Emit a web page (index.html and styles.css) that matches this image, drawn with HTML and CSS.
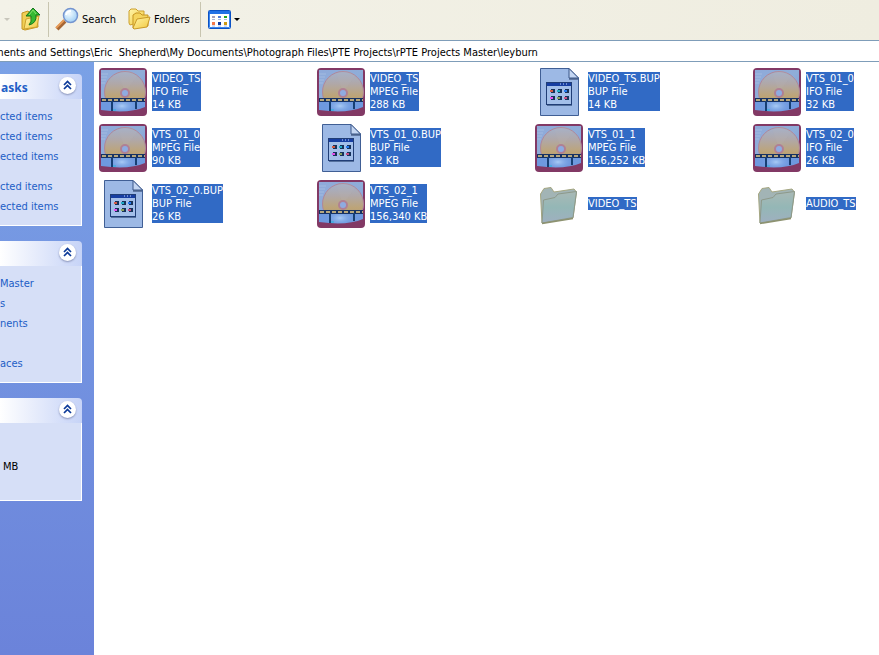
FILE: index.html
```html
<!DOCTYPE html>
<html lang="en">
<head>
<meta charset="utf-8">
<title>leyburn</title>
<link rel="stylesheet" href="styles.css">
</head>
<body>
<svg class="defs" aria-hidden="true">
  <defs>
    <linearGradient id="sky" x1="0" y1="0" x2="1" y2="1"><stop offset="0" stop-color="#8faada"/><stop offset=".5" stop-color="#8fadd8"/><stop offset="1" stop-color="#739bdd"/></linearGradient>
    <linearGradient id="disc" x1="0" y1="0" x2="0" y2="1"><stop offset="0" stop-color="#a3b0cc"/><stop offset=".3" stop-color="#b0a8a8"/><stop offset=".6" stop-color="#bda477"/><stop offset=".85" stop-color="#a9987f"/><stop offset="1" stop-color="#719ce0"/></linearGradient>
    <linearGradient id="fold" x1="0" y1="0" x2="0" y2="1"><stop offset="0" stop-color="#a9b9b6"/><stop offset=".5" stop-color="#94b7b6"/><stop offset="1" stop-color="#9fafc0"/></linearGradient>
    <linearGradient id="yellow" x1="0" y1="0" x2="1" y2="1"><stop offset="0" stop-color="#fff5a8"/><stop offset="1" stop-color="#f2c83f"/></linearGradient>
    <radialGradient id="lens" cx=".4" cy=".35" r=".7"><stop offset="0" stop-color="#f4fcff"/><stop offset="1" stop-color="#9ccdf4"/></radialGradient>
    <radialGradient id="glow"><stop offset="0" stop-color="#a9cbf5"/><stop offset="1" stop-color="#719be0" stop-opacity="0"/></radialGradient>
  </defs>
  <symbol id="video" viewBox="0 0 48 48">
    <rect width="48" height="48" rx="4" fill="#823965"/>
    <path d="M2 2H46V41Q36 46 20 44Q10 43 2 43Z" fill="url(#sky)"/>
    <path d="M2 6H9M2 9H8M2 12H7M2 15H6" stroke="#a3bbe0"/>
    <circle cx="26" cy="24" r="20.500" fill="url(#disc)" stroke="#b08799"/>
    <path d="M26 24L19 5Q31 0 38 8Z" fill="#b8b4b3" opacity=".2"/>
    <circle cx="26" cy="25" r="4" fill="#8fabe0" stroke="#b08094" stroke-width="2"/>
    <path d="M2 34H46V41Q36 46 20 44Q10 43 2 43Z" fill="#6e99df"/>
    <ellipse cx="23" cy="38" rx="15" ry="8" fill="url(#glow)"/>
    <path d="M2 42Q30 46 46 39V46H2Z" fill="#823965"/>
    <path d="M2 30H46V34H2Z" fill="#173263"/>
    <path d="M3 32H46" stroke="#b5a77e" stroke-width="2" stroke-dasharray="4 2"/>
    <path d="M13 33V43M37 33V41" stroke="#173f74" stroke-width="2"/>
    <path d="M14 42H17" stroke="#25b7df"/>
  </symbol>
  <symbol id="backup" viewBox="0 0 48 48">
    <path d="M5.500 .5H34L43.500 10V47.500H5.500Z" fill="#9db9e5" stroke="#405f95"/>
    <path d="M34 .5V10H43.500Z" fill="#c4d6f2" stroke="#3b5788"/>
    <path d="M34 11H43" stroke="#263a62"/>
    <rect x="11.500" y="14.500" width="25" height="22" fill="#a3bfe9" stroke="#213e76"/>
    <path d="M12 16.500H36" stroke="#173ea1" stroke-width="3"/>
    <path d="M25 16H34" stroke="#c5dcff" stroke-dasharray="1 2"/>
    <path d="M12 37.500H37" stroke="#55719d"/>
    <g fill="#17325a"><path d="M16 21h4v4h-4zM23 21h4v4h-4zM30 21h4v4h-4zM16 28h4v4h-4zM23 28h4v4h-4zM30 28h4v4h-4z"/></g>
    <path d="M15 22h3v2h-3z" fill="#d35a45"/><path d="M22 22h3v2h-3z" fill="#20aac5"/><path d="M29 22h3v2h-3z" fill="#277aed"/>
    <path d="M15 29h3v2h-3z" fill="#e04fe9"/><path d="M22 29h3v2h-3z" fill="#87a05d"/><path d="M29 29h3v2h-3z" fill="#c74f83"/>
  </symbol>
  <symbol id="folder" viewBox="0 0 48 48">
    <path d="M7 43L5.500 14L9 8.500L16 7.500L19 12L39 9L41.500 12L38 38Z" fill="#a2b4b5" stroke="#a5a681"/>
    <path d="M7 43L8.500 20L20 17.500L23 14L41.500 11.500L38 37.500Z" fill="url(#fold)" stroke="#8d998a"/>
    <path d="M7 43.500L38 38.500" stroke="#8d9270" stroke-width="1.500"/>
  </symbol>
  <symbol id="chevrons" viewBox="0 0 17 17">
    <path d="M5 8L8.500 4.500L12 8M5 12L8.500 8.500L12 12" fill="none" stroke="#0b3998" stroke-width="1.700"/>
  </symbol>
</svg>

<div class="toolbar" role="toolbar" aria-label="Standard buttons">
  <button class="tool history" type="button" aria-label="Recent pages"><span class="arrow faded"></span></button>
  <button class="tool up" type="button" aria-label="Up">
    <svg width="20" height="24" viewBox="0 0 20 24"><path d="M1 22V6L7 4L9 6L16 5L17 20L4 23Z" fill="#f0cf55" stroke="#c59522"/><path d="M3 22L5 12L18 9L16 20Z" fill="url(#yellow)" stroke="#cda02c"/><path d="M8 18Q11 15 10 9H5L12 1L19 8H15Q16 16 8 18Z" fill="#35b932" stroke="#14751a"/><path d="M8 8L12 3L15 7" fill="none" stroke="#87e26c"/></svg>
  </button>
  <span class="divider"></span>
  <button class="tool search" type="button">
    <svg width="24" height="24" viewBox="0 0 24 24"><path d="M2 22L10 14" stroke="#a66635" stroke-width="4"/><path d="M1 21L9 13" stroke="#e79b57" stroke-width="2"/><circle cx="15.500" cy="8.500" r="7" fill="url(#lens)" stroke="#7494cf" stroke-width="1.500"/><path d="M11 8Q12 4 16 4" fill="none" stroke="#fff" stroke-width="2"/></svg>
    <span>Search</span>
  </button>
  <button class="tool folders" type="button">
    <svg width="23" height="22" viewBox="0 0 23 22"><path d="M1 15V3L3 1H8L10 3H16V13L2 17Z" fill="url(#yellow)" stroke="#cda02c"/><path d="M5 20V7L8 5H12L14 7H20V18Z" fill="#f5d55e" stroke="#c59522"/><path d="M5 20L9 11L22 9L19 19L6 21Z" fill="url(#yellow)" stroke="#c99927"/></svg>
    <span>Folders</span>
  </button>
  <span class="divider"></span>
  <button class="tool views" type="button" aria-label="Views">
    <svg width="23" height="19" viewBox="0 0 23 19"><rect x=".5" y=".5" width="22" height="18" rx="1" fill="#fff" stroke="#0b52c5"/><path d="M1 1H22V4H1Z" fill="#2171e6"/><path d="M1.500 4V17.500H21.500V4" fill="none" stroke="#3a86ed"/><path d="M4 6h3v2H4z" fill="#a5a0bd"/><path d="M10 6h3v2h-3z" fill="#527bd5"/><path d="M16 6h3v2h-3z" fill="#26a51f"/><path d="M4 12h3v3H4z" fill="#f47949"/><path d="M10 12h3v3h-3z" fill="#123b9e"/><path d="M16 12h3v3h-3z" fill="#cf9b13"/><path d="M4 9.500H7M10 9.500H13M16 9.500H19M4 16H7M10 16H13M16 16H19" stroke="#aab9dc"/></svg>
    <span class="arrow"></span>
  </button>
</div>

<div class="address"><input type="text" aria-label="Address" value="ments and Settings\Eric  Shepherd\My Documents\Photograph Files\PTE Projects\rPTE Projects Master\leyburn"></div>

<div class="main">
  <aside class="sidebar">
    <section class="panel">
      <header><h2>asks</h2><button type="button" aria-label="Collapse tasks"><svg width="17" height="17"><use href="#chevrons"/></svg></button></header>
      <div class="panel-body">
        <a href="#">cted items</a>
        <a href="#">cted items</a>
        <a href="#">ected items</a>
        <a href="#" class="spaced">cted items</a>
        <a href="#">ected items</a>
      </div>
    </section>
    <section class="panel">
      <header><button type="button" aria-label="Collapse places"><svg width="17" height="17"><use href="#chevrons"/></svg></button></header>
      <div class="panel-body">
        <a href="#">Master</a>
        <a href="#">s</a>
        <a href="#">nents</a>
        <a href="#" class="skip">aces</a>
      </div>
    </section>
    <section class="panel">
      <header><button type="button" aria-label="Collapse details"><svg width="17" height="17"><use href="#chevrons"/></svg></button></header>
      <div class="panel-body details"><p>MB</p></div>
    </section>
  </aside>

  <main class="files">
    <div class="file"><svg><use href="#video"/></svg><div class="label">VIDEO_TS<br>IFO File<br>14 KB</div></div>
    <div class="file"><svg><use href="#video"/></svg><div class="label">VIDEO_TS<br>MPEG File<br>288 KB</div></div>
    <div class="file"><svg><use href="#backup"/></svg><div class="label">VIDEO_TS.BUP<br>BUP File<br>14 KB</div></div>
    <div class="file"><svg><use href="#video"/></svg><div class="label">VTS_01_0<br>IFO File<br>32 KB</div></div>
    <div class="file"><svg><use href="#video"/></svg><div class="label">VTS_01_0<br>MPEG File<br>90 KB</div></div>
    <div class="file"><svg><use href="#backup"/></svg><div class="label">VTS_01_0.BUP<br>BUP File<br>32 KB</div></div>
    <div class="file"><svg><use href="#video"/></svg><div class="label">VTS_01_1<br>MPEG File<br>156,252 KB</div></div>
    <div class="file"><svg><use href="#video"/></svg><div class="label">VTS_02_0<br>IFO File<br>26 KB</div></div>
    <div class="file"><svg><use href="#backup"/></svg><div class="label">VTS_02_0.BUP<br>BUP File<br>26 KB</div></div>
    <div class="file"><svg><use href="#video"/></svg><div class="label">VTS_02_1<br>MPEG File<br>156,340 KB</div></div>
    <div class="file"><svg><use href="#folder"/></svg><div class="label">VIDEO_TS</div></div>
    <div class="file"><svg><use href="#folder"/></svg><div class="label">AUDIO_TS</div></div>
  </main>
</div>
</body>
</html>
```
FILE: styles.css
```css
* { box-sizing: border-box; }

body {
  margin: 0;
  height: 100vh;
  display: flex;
  flex-direction: column;
  overflow: hidden;
  background: #fff;
  color: #000;
  font: 11px/13px Tahoma, "DejaVu Sans Condensed", "Noto Sans", sans-serif;
}

button, input { font: inherit; color: inherit; }
button { border: 0; padding: 0; background: none; }
.defs { position: absolute; width: 0; height: 0; }

.toolbar {
  flex: none;
  display: flex;
  align-items: center;
  height: 40px;
  padding-bottom: 2px;
  background: linear-gradient(90deg, #f3f2e8, #efede0);
}
.tool { display: flex; align-items: center; gap: 3px; }
.history { width: 21px; padding-left: 4px; }
.up { width: 27px; }
.search { padding-left: 6px; }
.folders { padding-left: 12px; }
.views { padding-left: 7px; }
.divider { width: 1px; height: 35px; background: #c8c5b0; }
.folders + .divider { margin-left: 10px; }
.arrow {
  border: 3px solid transparent;
  border-top-color: #000;
  border-bottom: 0;
}
.faded { border-top-color: #c8c6bb; }

.address {
  flex: none;
  border: solid #7f9db9;
  border-width: 1px 0;
  height: 22px;
  overflow: hidden;
}
.address input {
  display: block;
  width: 100%;
  height: 20px;
  margin-left: -6px;
  border: 0;
  padding: 2px 0 0;
  outline: 0;
  background: #fff;
}

.main { flex: 1; display: flex; min-height: 0; }

.sidebar {
  flex: none;
  width: 94px;
  padding: 12px 12px 0 0;
  background: linear-gradient(#7aa1e6, #6b83da);
  display: flex;
  flex-direction: column;
  gap: 15px;
}
.panel header {
  display: flex;
  align-items: center;
  height: 25px;
  padding: 0 6px 2px 1px;
  border-top-right-radius: 4px;
  background: linear-gradient(90deg, #fff, #c6d3f7);
}
.panel h2 { margin: 0; padding-top: 4px; font: bold 12px/13px Tahoma, "Noto Sans", sans-serif; color: #215dc6; }
.panel header button {
  width: 17px;
  height: 17px;
  margin-left: auto;
  border-radius: 50%;
  background: #fff;
  box-shadow: 0 1px 2px #8892b8;
}
.panel header svg { display: block; }
.panel-body {
  display: flex;
  flex-direction: column;
  padding: 8px 0;
  border: solid #fff;
  border-width: 0 1px 1px 0;
  background: #d6dff7;
}
.panel-body a { line-height: 20px; color: #215dc6; text-decoration: none; }
.panel-body .spaced { margin-top: 10px; }
.panel-body .skip { margin-top: 20px; }
.details { padding: 34px 0 23px 3px; }
.details p { margin: 0; line-height: 20px; }

.files {
  flex: 1;
  min-width: 0;
  display: grid;
  grid-template-columns: repeat(4, 218px);
  grid-auto-rows: 48px;
  align-content: start;
  row-gap: 8px;
  padding: 6px 0 0 5px;
  overflow: hidden;
}
.file { display: flex; align-items: center; gap: 5px; }
.file svg { width: 48px; height: 48px; }
.label { margin-bottom: 2px; background: #316ac5; color: #fff; white-space: nowrap; }
```
